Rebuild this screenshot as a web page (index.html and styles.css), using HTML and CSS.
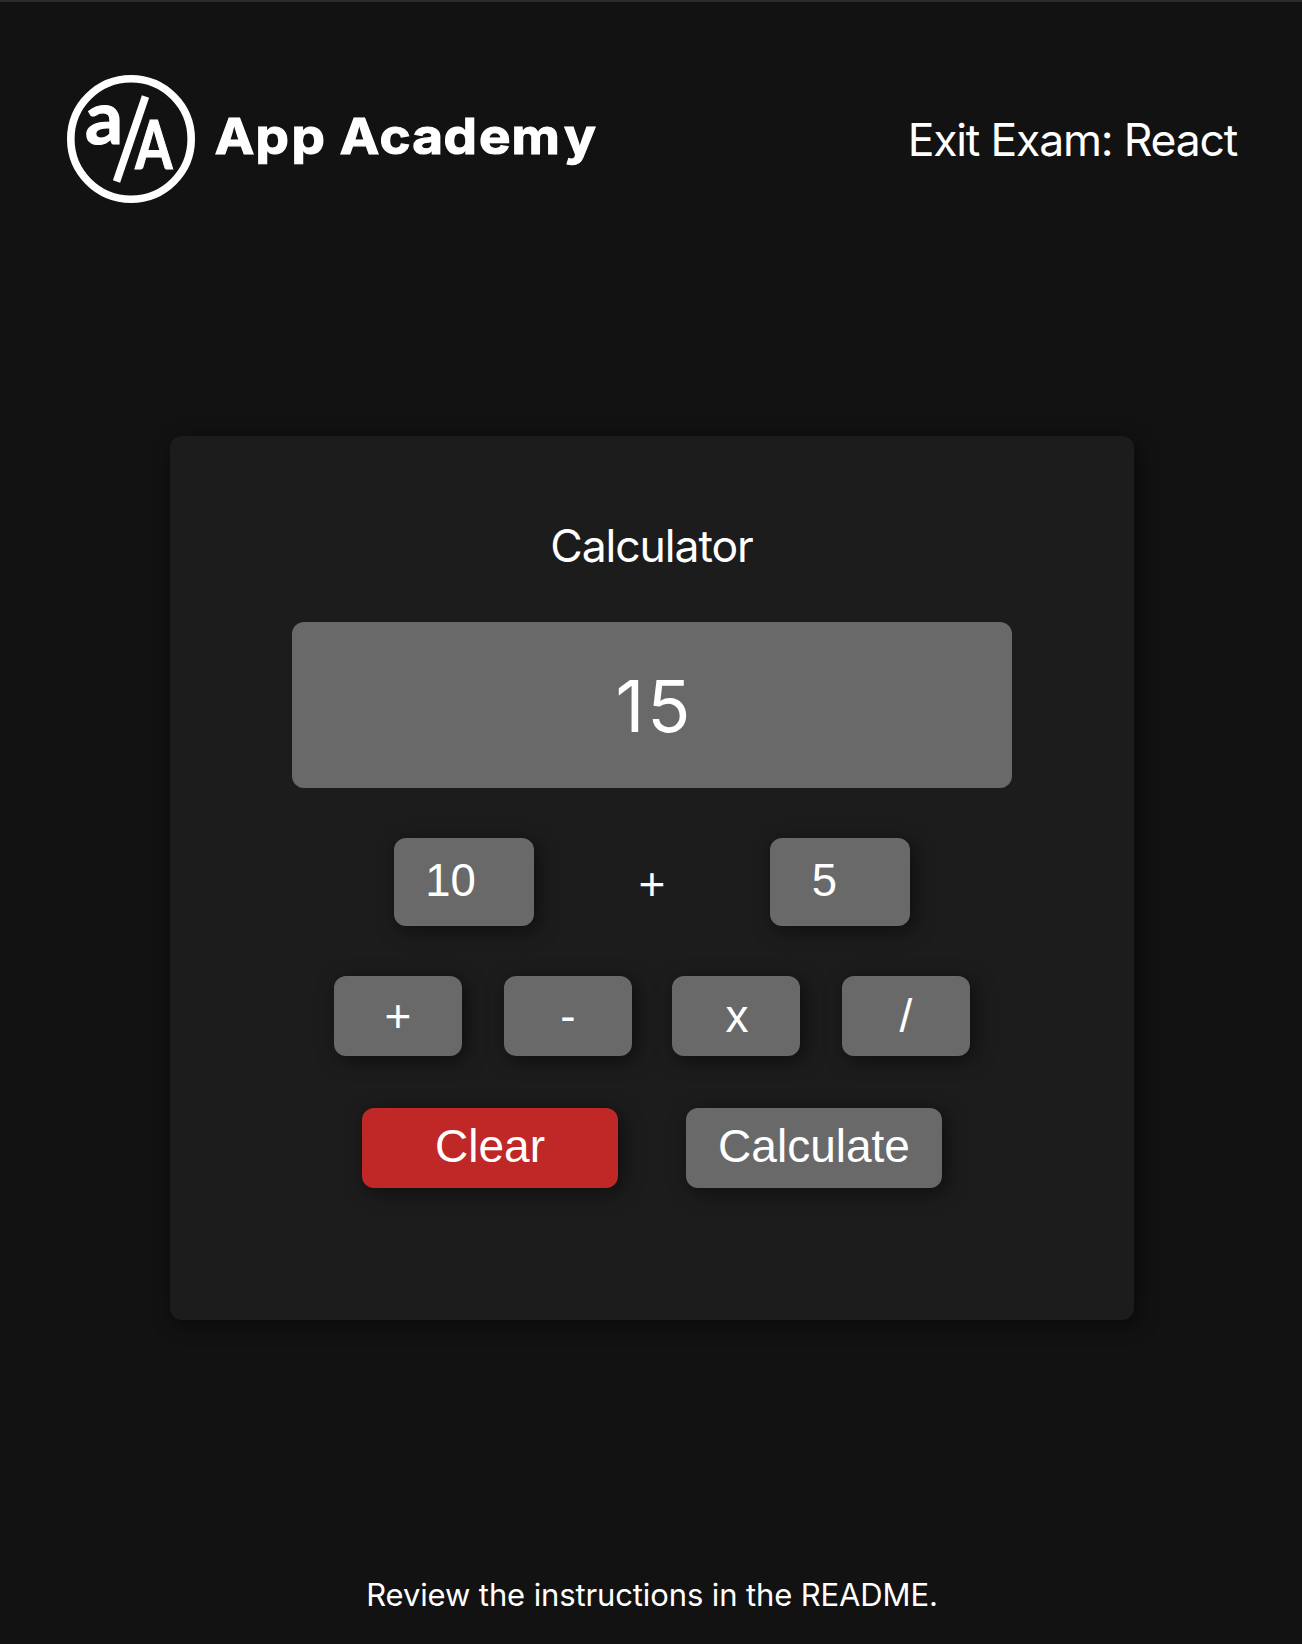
FILE: index.html
```html
<!DOCTYPE html>
<html lang="en">
<head>
<meta charset="utf-8">
<title>Exit Exam: React</title>
<link rel="stylesheet" href="styles.css">
</head>
<body>
<div class="page">
  <header class="header">
    <svg class="logo" width="540" height="132" viewBox="65 73 540 132" role="img" aria-label="App Academy">
      <circle class="logo-ring" cx="131" cy="139" r="60.2"/>
      <path class="logo-slash" d="M145.5 96.5 116.500 181.500"/>
      <text class="logo-mark" transform="translate(85 144.300)" font-size="75">a</text>
      <text class="logo-mark" transform="translate(135.2 168.500) scale(.81 1)" font-size="66">A</text>
      <text class="logo-name" transform="translate(0 154.200) scale(1.06 1)" y="0" x="202.500 241 275 307 320.500 358 389 418.500 452 482.500 532">App Academy</text>
    </svg>
    <h1 class="title">Exit Exam: React</h1>
  </header>
  <main class="calculator">
    <h2 class="heading">Calculator</h2>
    <div class="display"><span class="result">15</span></div>
    <div class="operands">
      <div class="operand">10</div>
      <span class="operator">+</span>
      <div class="operand">5</div>
    </div>
    <div class="operations">
      <button class="button">+</button>
      <button class="button">-</button>
      <button class="button">x</button>
      <button class="button">/</button>
    </div>
    <div class="actions">
      <button class="button wide clear">Clear</button>
      <button class="button wide">Calculate</button>
    </div>
  </main>
  <footer class="footer">Review the instructions in the README.</footer>
</div>
</body>
</html>
```
FILE: styles.css
```css
* { box-sizing: border-box; }
body {
  margin: 0;
  background: #121212;
  color: #fff;
  font-family: Inter, sans-serif;
}
.page {
  display: flex;
  flex-direction: column;
  align-items: center;
  height: 1644px;
  padding-left: 2px;
  border-top: 2px solid #2a2a2a;
}
.header {
  display: flex;
  justify-content: space-between;
  align-items: center;
  width: 100%;
  height: 274px;
  padding: 0 65px 0 63px;
}
.logo { display: block; overflow: visible; }
.logo-ring { fill: none; stroke: #fff; stroke-width: 7.6; }
.logo-slash { fill: none; stroke: #fff; stroke-width: 7.6; }
.logo-mark {
  font-family: Lato, sans-serif;
  font-weight: 700;
  fill: #fff;
  stroke: #fff;
  stroke-width: 1.2;
}
.logo-name {
  font-family: Inter, sans-serif;
  font-weight: 700;
  font-size: 50px;
  fill: #fff;
  stroke: #fff;
  stroke-width: 1.2;
}
.title, .heading {
  margin: 0;
  font-size: 44.5px;
  font-weight: 400;
  line-height: 54px;
  white-space: nowrap;
}
.title { letter-spacing: -1.2px; padding-top: 2px; }
.calculator {
  display: flex;
  flex-direction: column;
  align-items: center;
  width: 964px;
  height: 884px;
  margin-top: 160px;
  padding-top: 83px;
  border-radius: 12px;
  background: #1c1c1c;
  box-shadow: 4px 4px 20px rgba(0, 0, 0, .5);
}
.heading { letter-spacing: -1.1px; padding-right: 1px; }
.display {
  display: flex;
  justify-content: center;
  align-items: center;
  width: 720px;
  height: 166px;
  margin-top: 49px;
  border-radius: 12px;
  background: #696969;
  font-size: 71px;
}
.result { padding: 2px 0 0 5px; letter-spacing: 3px; }
.operands {
  display: flex;
  justify-content: space-between;
  width: 516px;
  margin-top: 50px;
}
.operand {
  width: 140px;
  height: 88px;
  padding-right: 27px;
  border-radius: 12px;
  background: #696969;
  box-shadow: 4px 4px 20px rgba(0, 0, 0, .5);
  font: 45.5px/86px "Liberation Sans", sans-serif;
  text-align: center;
}
.operand:last-child { padding-right: 31px; }
.operator { font: 46px/93px "Liberation Sans", sans-serif; height: 88px; }
.operations {
  display: flex;
  gap: 42px;
  width: 636px;
  margin-top: 50px;
}
.operations .button { padding-bottom: 1px; }
.operations .button:nth-child(3) { margin-left: -2px; padding-left: 2px; }
.button {
  width: 128px;
  height: 80px;
  padding: 0 0 4px;
  border: 0;
  border-radius: 12px;
  background: #696969;
  color: #fff;
  box-shadow: 4px 4px 20px rgba(0, 0, 0, .5);
  font: 46px/76px "Liberation Sans", sans-serif;
}
.actions {
  display: flex;
  justify-content: space-between;
  width: 580px;
  margin-top: 52px;
}
.wide { width: 256px; }
.clear { background: #c02727; }
.footer {
  margin-top: 255px;
  font-size: 31px;
  line-height: 40px;
  letter-spacing: -.12px;
  white-space: nowrap;
}
```
